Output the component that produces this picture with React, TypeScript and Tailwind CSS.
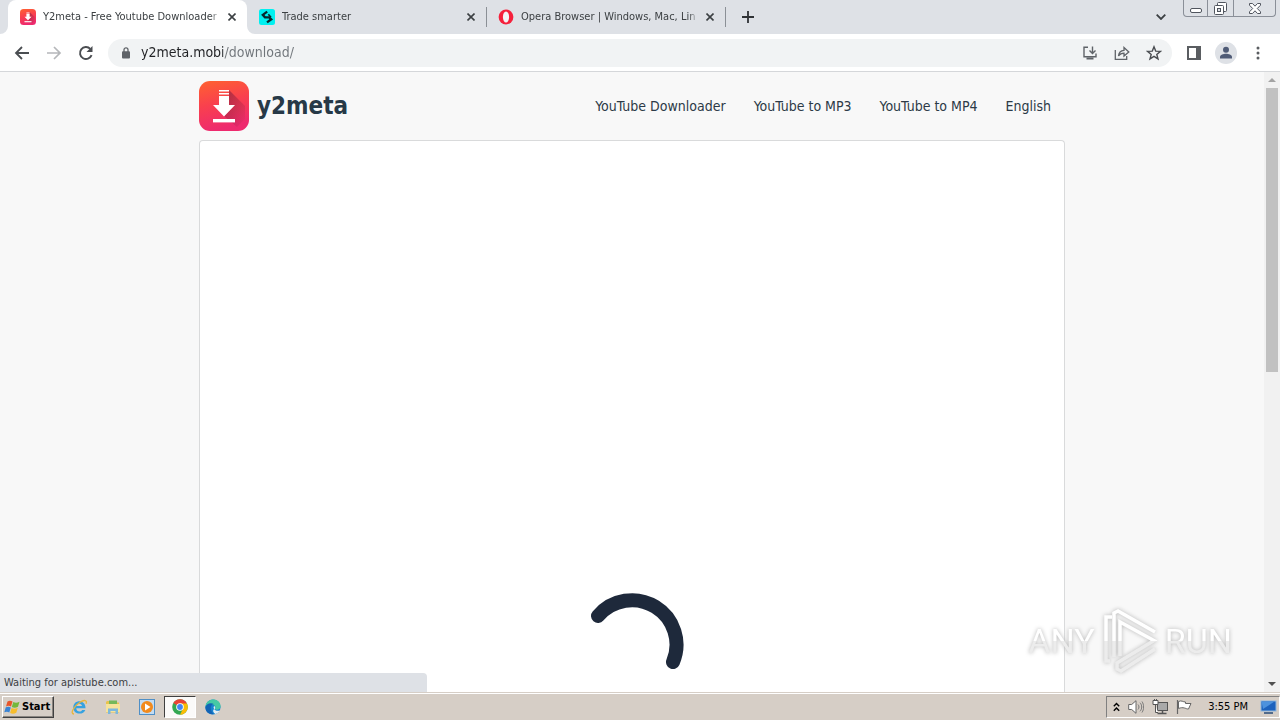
import type { ReactNode } from "react";

function DownloadLogo({ className, id }: { className: string; id: string }) {
  return (
    <svg viewBox="0 0 50 50" className={className} aria-hidden="true">
      <defs>
        <linearGradient id={id} x1="0" y1="0" x2="0.25" y2="1">
          <stop offset="0" stopColor="#ff6230" />
          <stop offset="0.5" stopColor="#f9404e" />
          <stop offset="1" stopColor="#ee2a6e" />
        </linearGradient>
        <linearGradient id={`${id}-shade`} x1="0" y1="0" x2="1" y2="1">
          <stop offset="0.2" stopColor="#8c2040" stopOpacity="0.6" />
          <stop offset="1" stopColor="#8c2040" stopOpacity="0" />
        </linearGradient>
      </defs>
      <rect width="50" height="50" rx="11" fill={`url(#${id})`} />
      <path d="M30 9 L46 25 V38 L38 46 L25 35 L36 24 H30 Z" fill={`url(#${id}-shade)`} />
      <path d="M20 9h10v1.500H20z M20 12h10v1.500H20z M20 15h10v9h6L25 35.500 14 24h6z" fill="#fff" />
      <rect x="14" y="38" width="22" height="3.400" fill="#fff" />
    </svg>
  );
}

function TradeIcon() {
  return (
    <svg viewBox="0 0 16 16" className="size-4 shrink-0" aria-hidden="true">
      <rect width="16" height="16" rx="2.500" fill="#00f0f0" />
      <path d="M8.200 2.600 3.800 5.900 6 8.300h4.200L12.300 10.300 8 13.400" fill="none" stroke="#07282c" strokeWidth="2.300" />
      <path d="M9.300 5.300 12 8.300" stroke="#07282c" strokeWidth="1.600" />
    </svg>
  );
}

function OperaIcon() {
  return (
    <svg viewBox="0 0 16 16" className="size-4 shrink-0" aria-hidden="true">
      <circle cx="8" cy="8" r="7.400" fill="#f5213c" />
      <ellipse cx="8" cy="8" rx="3.100" ry="5.600" fill="#f4f4f6" />
    </svg>
  );
}

function CloseIcon() {
  return (
    <svg viewBox="0 0 8 8" className="size-2" aria-hidden="true">
      <path d="M.5.5l7 7M7.500.5l-7 7" stroke="#3c4043" strokeWidth="1.600" />
    </svg>
  );
}

type TabProps = { icon: ReactNode; title: string; active?: boolean; divided?: boolean };

function Tab({ icon, title, active, divided }: TabProps) {
  return (
    <div
      role="tab"
      aria-selected={!!active}
      className={
        "relative flex h-full w-[239px] min-w-0 items-center gap-[7px] pr-[11px] pl-3 " +
        (active ? "rounded-t-lg bg-white" : "")
      }
    >
      {active && (
        <>
          <svg viewBox="0 0 8 8" className="absolute bottom-0 -left-2 size-2" aria-hidden="true">
            <path d="M8 0v8H0a8 8 0 0 0 8-8z" fill="#fff" />
          </svg>
          <svg viewBox="0 0 8 8" className="absolute -right-2 bottom-0 size-2" aria-hidden="true">
            <path d="M0 0v8h8a8 8 0 0 1-8-8z" fill="#fff" />
          </svg>
        </>
      )}
      {icon}
      <span className="min-w-0 flex-1 mask-r-from-94% text-[11px] whitespace-nowrap text-[#3c4043]">
        {title}
      </span>
      <button type="button" aria-label={`Close ${title}`}>
        <CloseIcon />
      </button>
      {divided && <span className="absolute -right-px h-5 w-px bg-[#8b9096]" />}
    </div>
  );
}

function TabStrip() {
  return (
    <div className="flex h-[34px] shrink-0 items-stretch bg-[#dee1e6] pl-2">
      <div role="tablist" className="flex min-w-0">
        <Tab active title="Y2meta - Free Youtube Downloader" icon={<DownloadLogo className="size-4 shrink-0" id="tab-logo" />} />
        <Tab divided title="Trade smarter" icon={<TradeIcon />} />
        <Tab divided title="Opera Browser | Windows, Mac, Lin" icon={<OperaIcon />} />
      </div>
      <button type="button" aria-label="New tab" className="flex w-[46px] items-center justify-center">
        <svg viewBox="0 0 12 12" className="size-3" aria-hidden="true">
          <path d="M6 0v12M0 6h12" stroke="#2f3235" strokeWidth="1.800" />
        </svg>
      </button>
      <button type="button" aria-label="Search tabs" className="ml-auto flex w-11 items-center justify-center">
        <svg viewBox="0 0 10 6" className="h-1.5 w-2.5" aria-hidden="true">
          <path d="M.7.7 5 5 9.300.7" fill="none" stroke="#3c4043" strokeWidth="1.800" />
        </svg>
      </button>
      <div className="mr-1 flex h-[17px] divide-x divide-[#8a8f98] rounded-b-[4px] border border-t-0 border-[#8a8f98]">
        <button type="button" aria-label="Minimize" className="flex w-6 items-center justify-center">
          <svg viewBox="0 0 12 12" className="size-3" aria-hidden="true">
            <rect x=".5" y="6.500" width="11" height="4" rx="1.500" fill="#fff" stroke="#50555e" />
          </svg>
        </button>
        <button type="button" aria-label="Restore" className="flex w-[26px] items-center justify-center">
          <svg viewBox="0 0 13 13" className="size-[13px]" aria-hidden="true">
            <rect x="3.500" y=".5" width="9" height="9" rx="1" fill="#fff" stroke="#50555e" />
            <rect x=".5" y="3.500" width="9" height="9" rx="1" fill="#fff" stroke="#50555e" />
            <rect x="3.500" y="6.500" width="3" height="3" fill="#dee1e6" stroke="#50555e" />
          </svg>
        </button>
        <button type="button" aria-label="Close window" className="flex w-[41px] items-center justify-center">
          <svg viewBox="0 0 12 11" className="h-[11px] w-3" aria-hidden="true">
            <path d="M.5.5h3L6 3.200 8.500.5h3v1.700L8.300 5.500l3.200 3.300v1.700h-3L6 7.800 3.500 10.500h-3V8.800l3.200-3.300L.5 2.200z" fill="#fff" stroke="#50555e" />
          </svg>
        </button>
      </div>
    </div>
  );
}

function ToolButton({ label, children }: { label: string; children: ReactNode }) {
  return (
    <button type="button" aria-label={label} className="flex h-7 w-8 shrink-0 items-center justify-center text-[#5f6368]">
      {children}
    </button>
  );
}

function Toolbar() {
  return (
    <div className="flex h-[38px] shrink-0 items-center border-b border-[#d5d7da] bg-white px-1.5">
      <ToolButton label="Back">
        <svg viewBox="0 0 16 16" className="size-4 text-[#4a4d51]" fill="none" stroke="currentColor" strokeWidth="1.800" aria-hidden="true">
          <path d="M15 8H2M8 2 2 8l6 6" />
        </svg>
      </ToolButton>
      <ToolButton label="Forward">
        <svg viewBox="0 0 16 16" className="size-4 text-[#b5b7ba]" fill="none" stroke="currentColor" strokeWidth="1.700" aria-hidden="true">
          <path d="M1 8h13M8 2l6 6-6 6" />
        </svg>
      </ToolButton>
      <ToolButton label="Reload">
        <svg viewBox="0 0 16 16" className="size-4" aria-hidden="true">
          <path d="M13.600 10.200A6 6 0 1 1 12.300 3.800" fill="none" stroke="#4a4d51" strokeWidth="1.900" />
          <path d="M14.500 1v6H8.500z" fill="#4a4d51" />
        </svg>
      </ToolButton>
      <div className="ml-1.5 flex h-7 min-w-0 flex-1 items-center rounded-full bg-[#f1f3f4] pr-0.5 pl-3.5">
        <svg viewBox="0 0 8 12" className="h-3 w-2 shrink-0" aria-hidden="true">
          <rect y="4.300" width="8" height="7.200" rx="1" fill="#5f6368" />
          <path d="M2 5V2.800a2 2 0 0 1 4 0V5" fill="none" stroke="#5f6368" strokeWidth="1.300" />
        </svg>
        <input
          type="text"
          aria-label="Address and search bar"
          defaultValue="y2meta.mobi/download/"
          className="ml-[11px] min-w-0 flex-1 bg-linear-to-r from-[#202124] from-[82px] to-[#70757a] to-[82px] bg-clip-text text-[14px] text-transparent outline-none"
        />
        <ToolButton label="Install app">
          <svg viewBox="0 0 16 16" className="size-4" fill="none" stroke="currentColor" strokeWidth="1.400" aria-hidden="true">
            <path d="M6 2.200H2v9.500h12V8.500M10.500 1.500v6.700M7.500 5.500l3 3 3-3" />
            <path d="M4.500 13.500h7" strokeWidth="2" />
          </svg>
        </ToolButton>
        <ToolButton label="Share">
          <svg viewBox="0 0 16 16" className="size-4" fill="none" stroke="currentColor" strokeWidth="1.300" aria-hidden="true">
            <path d="M1.300 5v9.300h11.400V11M4.500 11c.3-3.700 2.200-5.300 5.500-5.600V2.500L14.800 7 10 11V8.200c-2.500 0-4.200.8-5.500 2.800z" />
          </svg>
        </ToolButton>
        <ToolButton label="Bookmark this tab">
          <svg viewBox="0 0 16 16" className="size-4" fill="none" stroke="#4a4d51" strokeWidth="1.400" aria-hidden="true">
            <path d="M8 1.800l1.700 4.300 4.700.3-3.600 3 1.200 4.500L8 11.400l-4 2.500 1.200-4.500-3.600-3 4.700-.3z" />
          </svg>
        </ToolButton>
      </div>
      <span className="w-1.5" />
      <ToolButton label="Side panel">
        <svg viewBox="0 0 14 14" className="size-3.5" aria-hidden="true">
          <rect x="1" y="1" width="12" height="12" fill="#fff" stroke="#5a5d61" strokeWidth="2" />
          <rect x="9" width="5" height="14" fill="#5a5d61" />
        </svg>
      </ToolButton>
      <ToolButton label="Profile">
        <svg viewBox="0 0 22 22" className="size-[22px]" aria-hidden="true">
          <circle cx="11" cy="11" r="11" fill="#dee1e6" />
          <circle cx="11" cy="7.700" r="3" fill="#4f5b76" />
          <path d="M5 16.500v-1.600c0-2 3.500-3.100 6-3.100s6 1.100 6 3.100v1.600z" fill="#4f5b76" />
        </svg>
      </ToolButton>
      <ToolButton label="Menu">
        <svg viewBox="0 0 4 14" className="h-3.5 w-1" fill="#5a5d61" aria-hidden="true">
          <circle cx="2" cy="2" r="1.500" />
          <circle cx="2" cy="7" r="1.500" />
          <circle cx="2" cy="12" r="1.500" />
        </svg>
      </ToolButton>
    </div>
  );
}

const links = ["YouTube Downloader", "YouTube to MP3", "YouTube to MP4", "English"];

function Page() {
  return (
    <div className="flex min-w-0 flex-1 flex-col overflow-hidden bg-[#f8f8f8] px-4">
      <div className="mx-auto flex w-full max-w-[866px] flex-1 flex-col">
        <header className="flex h-[68px] shrink-0 items-center justify-between">
          <a href="#home" className="flex items-center gap-2">
            <DownloadLogo className="size-[50px]" id="page-logo" />
            <span className="text-2xl font-bold text-[#273947]">y2meta</span>
          </a>
          <nav className="flex">
            {links.map((link) => (
              <a key={link} href="#nav" className="px-3.5 text-[14px] text-[#2c3a47]">
                {link}
              </a>
            ))}
          </nav>
        </header>
        <main className="flex flex-1 items-end justify-center rounded-t border border-b-0 border-[#d9dadb] bg-white">
          <svg viewBox="0 0 104 100" className="h-[100px] w-[104px]" role="img" aria-label="Loading">
            <path d="M18 24A44.500 44.500 0 0 1 93 70" fill="none" stroke="#1e293b" strokeWidth="14" strokeLinecap="round" />
          </svg>
        </main>
      </div>
    </div>
  );
}

function Scrollbar() {
  return (
    <div className="flex w-4 shrink-0 flex-col items-center justify-between bg-[#f1f1f1]" aria-hidden="true">
      <div className="flex h-full w-3 flex-col items-center">
        <span className="flex h-4 items-center">
          <svg viewBox="0 0 8 4" className="h-1 w-2">
            <path d="M0 4l4-4 4 4z" fill="#a3a3a3" />
          </svg>
        </span>
        <span className="h-[47%] w-full bg-[#c1c1c1]" />
      </div>
      <span className="flex h-4 shrink-0 items-center">
        <svg viewBox="0 0 8 4" className="h-1 w-2">
          <path d="M0 0l4 4 4-4z" fill="#505050" />
        </svg>
      </span>
    </div>
  );
}

function Watermark() {
  return (
    <div className="pointer-events-none absolute right-12 bottom-[18px] flex items-center gap-1.5 font-['Liberation_Sans_Narrow','Roboto',sans-serif] text-[34px] leading-none drop-shadow-[0_0_2px_#b4b4b4]">
      <span className="bg-linear-to-b from-white from-50% to-[#ececec] to-50% bg-clip-text text-transparent">ANY</span>
      <svg viewBox="0 0 58 66" className="h-[66px] w-[58px]" fill="none" stroke="url(#mark)" strokeWidth="3.500" aria-hidden="true">
        <defs>
          <linearGradient id="mark" gradientUnits="userSpaceOnUse" x1="0" y1="0" x2="0" y2="66">
            <stop offset="0.5" stopColor="#fff" />
            <stop offset="0.5" stopColor="#ececec" />
          </linearGradient>
        </defs>
        <path d="M11 9H5v44h4M13 49V5l4-2 37 21M19 48V14l34 18.500-37 22.500v6l4 2 34-22" />
      </svg>
      <span className="bg-linear-to-b from-white from-50% to-[#ececec] to-50% bg-clip-text text-transparent">RUN</span>
    </div>
  );
}

function TaskIcon({ label, children, pressed }: { label: string; children: ReactNode; pressed?: boolean }) {
  return (
    <button
      type="button"
      aria-label={label}
      className={
        "flex h-[22px] items-center justify-center border " +
        (pressed ? "w-8 border-t-[#404040] border-r-white border-b-white border-l-[#404040] bg-[#fbfaf9]" : "w-[34px] border-transparent")
      }
    >
      <svg viewBox="0 0 16 16" className="size-4" aria-hidden="true">
        {children}
      </svg>
    </button>
  );
}

function Taskbar() {
  return (
    <footer className="flex h-7 shrink-0 items-end bg-[#d6cec6] pt-px">
      <div className="flex h-full w-full items-center border-t border-white pl-0.5">
        <button
          type="button"
          className="flex h-[22px] items-center gap-px border border-t-white border-r-[#404040] border-b-[#404040] border-l-white pr-[3px] pl-px text-[11px] font-bold text-black shadow-[inset_-1px_-1px_#8a8580]"
        >
          <svg viewBox="0 0 17 16" className="h-4 w-[17px]" aria-hidden="true">
            <path d="M3.500 2.500C5.500 1.200 7 1.600 8.500 2.600L7 7.600C5.500 6.600 4 6.400 2 7.400z" fill="#e8562a" />
            <path d="M9.300 3c1.800 1.100 3.600 1.200 6.200-.2L14 7.800c-2.300 1.300-4.300 1.200-6.200.2z" fill="#74b83c" />
            <path d="M1.800 8.300c2-1 3.600-.8 5 .2l-1.500 5c-1.500-1-3-1.200-5-.2z" fill="#3a84d4" />
            <path d="M7.600 8.900c1.900 1 3.900 1.100 6.200-.2l-1.500 5c-2.300 1.300-4.300 1.200-6.200.2z" fill="#f7bd2c" />
          </svg>
          Start
        </button>
        <div className="ml-2 flex items-center">
          <TaskIcon label="Internet Explorer">
            <path d="M14.500 9.300H5.300c.2 4 4.800 4 5.800 1.600h3.200c-1.500 5.300-12 5.300-12-2.500 0-8 12.400-8.400 12.200.9zM5.400 7h5.600c-.4-3-5.200-3-5.600 0z" fill="#36a2e0" fillRule="evenodd" />
            <path d="M3 15C-1.500 15 3 7 9 3.200c4-2.600 7.500-2.200 6 1.500" fill="none" stroke="#e9b63a" strokeWidth="1.300" />
          </TaskIcon>
          <TaskIcon label="File Explorer">
            <path d="M1 3l1-1h5l1 1.500h6v10H1z" fill="#e8c34d" />
            <path d="M4 1.500h8V6H4z" fill="#74b85a" />
            <path d="M1 5h14v8H1z" fill="#f6e39b" />
            <path d="M3 15V9.500h10V15h-2.500v-3h-5v3z" fill="#7db8dc" />
          </TaskIcon>
          <TaskIcon label="Media Player">
            <rect x=".5" y=".5" width="15" height="15" fill="#c3dcf2" stroke="#4f8fc6" />
            <circle cx="8" cy="8" r="6" fill="#f28a1c" />
            <path d="M6 4.500v7L11.500 8z" fill="#fff" />
          </TaskIcon>
          <TaskIcon label="Chrome" pressed>
            <circle cx="8" cy="8" r="7.800" fill="#34a853" />
            <path d="M8 8 1.250 4.100A7.800 7.800 0 0 1 14.750 4.100L14 5H8z" fill="#ea4335" />
            <path d="M8 4.500h6.960A7.800 7.800 0 0 1 8 15.800L11 9.800z" fill="#fbbc05" />
            <circle cx="8" cy="8" r="3.800" fill="#fff" />
            <circle cx="8" cy="8" r="2.900" fill="#4285f4" />
          </TaskIcon>
          <TaskIcon label="Edge">
            <circle cx="8" cy="8" r="7.600" fill="#1583d0" />
            <path d="M.5 7.500C1.500-2 15.500-1.500 15.600 7.200c0 3-3 4.300-5.800 3.100 1.400-2 .2-4.600-2.500-4.600-3 0-5 1-6.800 1.800z" fill="#45c9a5" />
            <path d="M.4 8c1-3.800 6-5 8.800-2.700C5.500 5 4 10 8.500 14.900 4 16.300 0 12.500.4 8z" fill="#1264b5" />
            <path d="M9.800 10.300C8 9.500 8.500 7.500 9.300 7c1.200 1 1.200 2.200.5 3.300zM9 10c1.500 2 4 2.200 6 1.500-1.200 2-2.800 3-4.700 3.400C8 13.600 7.500 11.500 9 10z" fill="#e5eef2" />
          </TaskIcon>
        </div>
        <div className="ml-auto flex h-[22px] items-center border border-t-[#808080] border-r-white border-b-white border-l-[#808080] pr-0.5 pl-1.5 text-[11px] text-black">
          <svg viewBox="0 0 7 10" className="mr-2 h-2.5 w-[7px]" fill="none" stroke="#000" strokeWidth="1.400" aria-hidden="true">
            <path d="M.8 4.200 3.500 1.500l2.700 2.700M.8 8.700 3.500 6l2.700 2.700" />
          </svg>
          <svg viewBox="0 0 16 16" className="mr-2 size-4" aria-hidden="true">
            <path d="M.7 5.500h3L8 1.700v12.600l-4.300-3.800h-3z" fill="#fff" stroke="#666" />
            <path d="M10 5.500c1.300 1.500 1.300 3.500 0 5M12 3.700c2.300 2.500 2.300 6.100 0 8.600M14 2.500c2.200 3.500 2.200 7.500 0 11" fill="none" stroke="#777" />
          </svg>
          <svg viewBox="0 0 16 16" className="mr-2 size-4" aria-hidden="true">
            <rect x="5.500" y="3.500" width="10" height="8" fill="#a9a9a9" stroke="#555" />
            <path d="M5.500 14.500h9M10.500 12v2" stroke="#555" strokeWidth="1.500" />
            <path d="M1 1.500h5v4H1zM3.500 6v7.500H6M2.500 0v2M4.500 0v2" fill="#fff" stroke="#555" />
          </svg>
          <svg viewBox="0 0 16 16" className="size-4" aria-hidden="true">
            <path d="M2.500 2.500c3-1.500 4.500.5 7 .5v1.500h5.500L12.500 10c-2 0-2-.5-4-1-2-.5-3.500-.5-6 .5z" fill="#fff" stroke="#666" />
            <path d="M1.500 1v14" stroke="#666" strokeWidth="1.200" />
          </svg>
          <time className="mr-3 ml-4 whitespace-nowrap">3:55 PM</time>
          <svg viewBox="0 0 17 14" className="h-3.5 w-[17px]" role="img" aria-label="Show desktop">
            <rect x="1" y="1" width="15" height="10" fill="#1d62bd" stroke="#8fb6dc" />
            <path d="M1.500 1.500h13L3 9z" fill="#4d92dd" />
            <path d="M4 13h9" stroke="#274b78" strokeWidth="1.500" />
          </svg>
        </div>
      </div>
    </footer>
  );
}

export default function App() {
  return (
    <div className="flex h-screen flex-col overflow-hidden font-['DejaVu_Sans_Condensed','DejaVu_Sans',sans-serif]">
      <TabStrip />
      <Toolbar />
      <div className="relative flex min-h-0 flex-1">
        <Page />
        <Scrollbar />
        <div role="status" className="absolute bottom-0 left-0 flex h-[19px] w-1/3 items-center rounded-tr bg-[#dee1e6] pt-0.5 pl-1 text-[11px] text-[#3c4043]">
          Waiting for apistube.com...
        </div>
        <Watermark />
      </div>
      <Taskbar />
    </div>
  );
}
